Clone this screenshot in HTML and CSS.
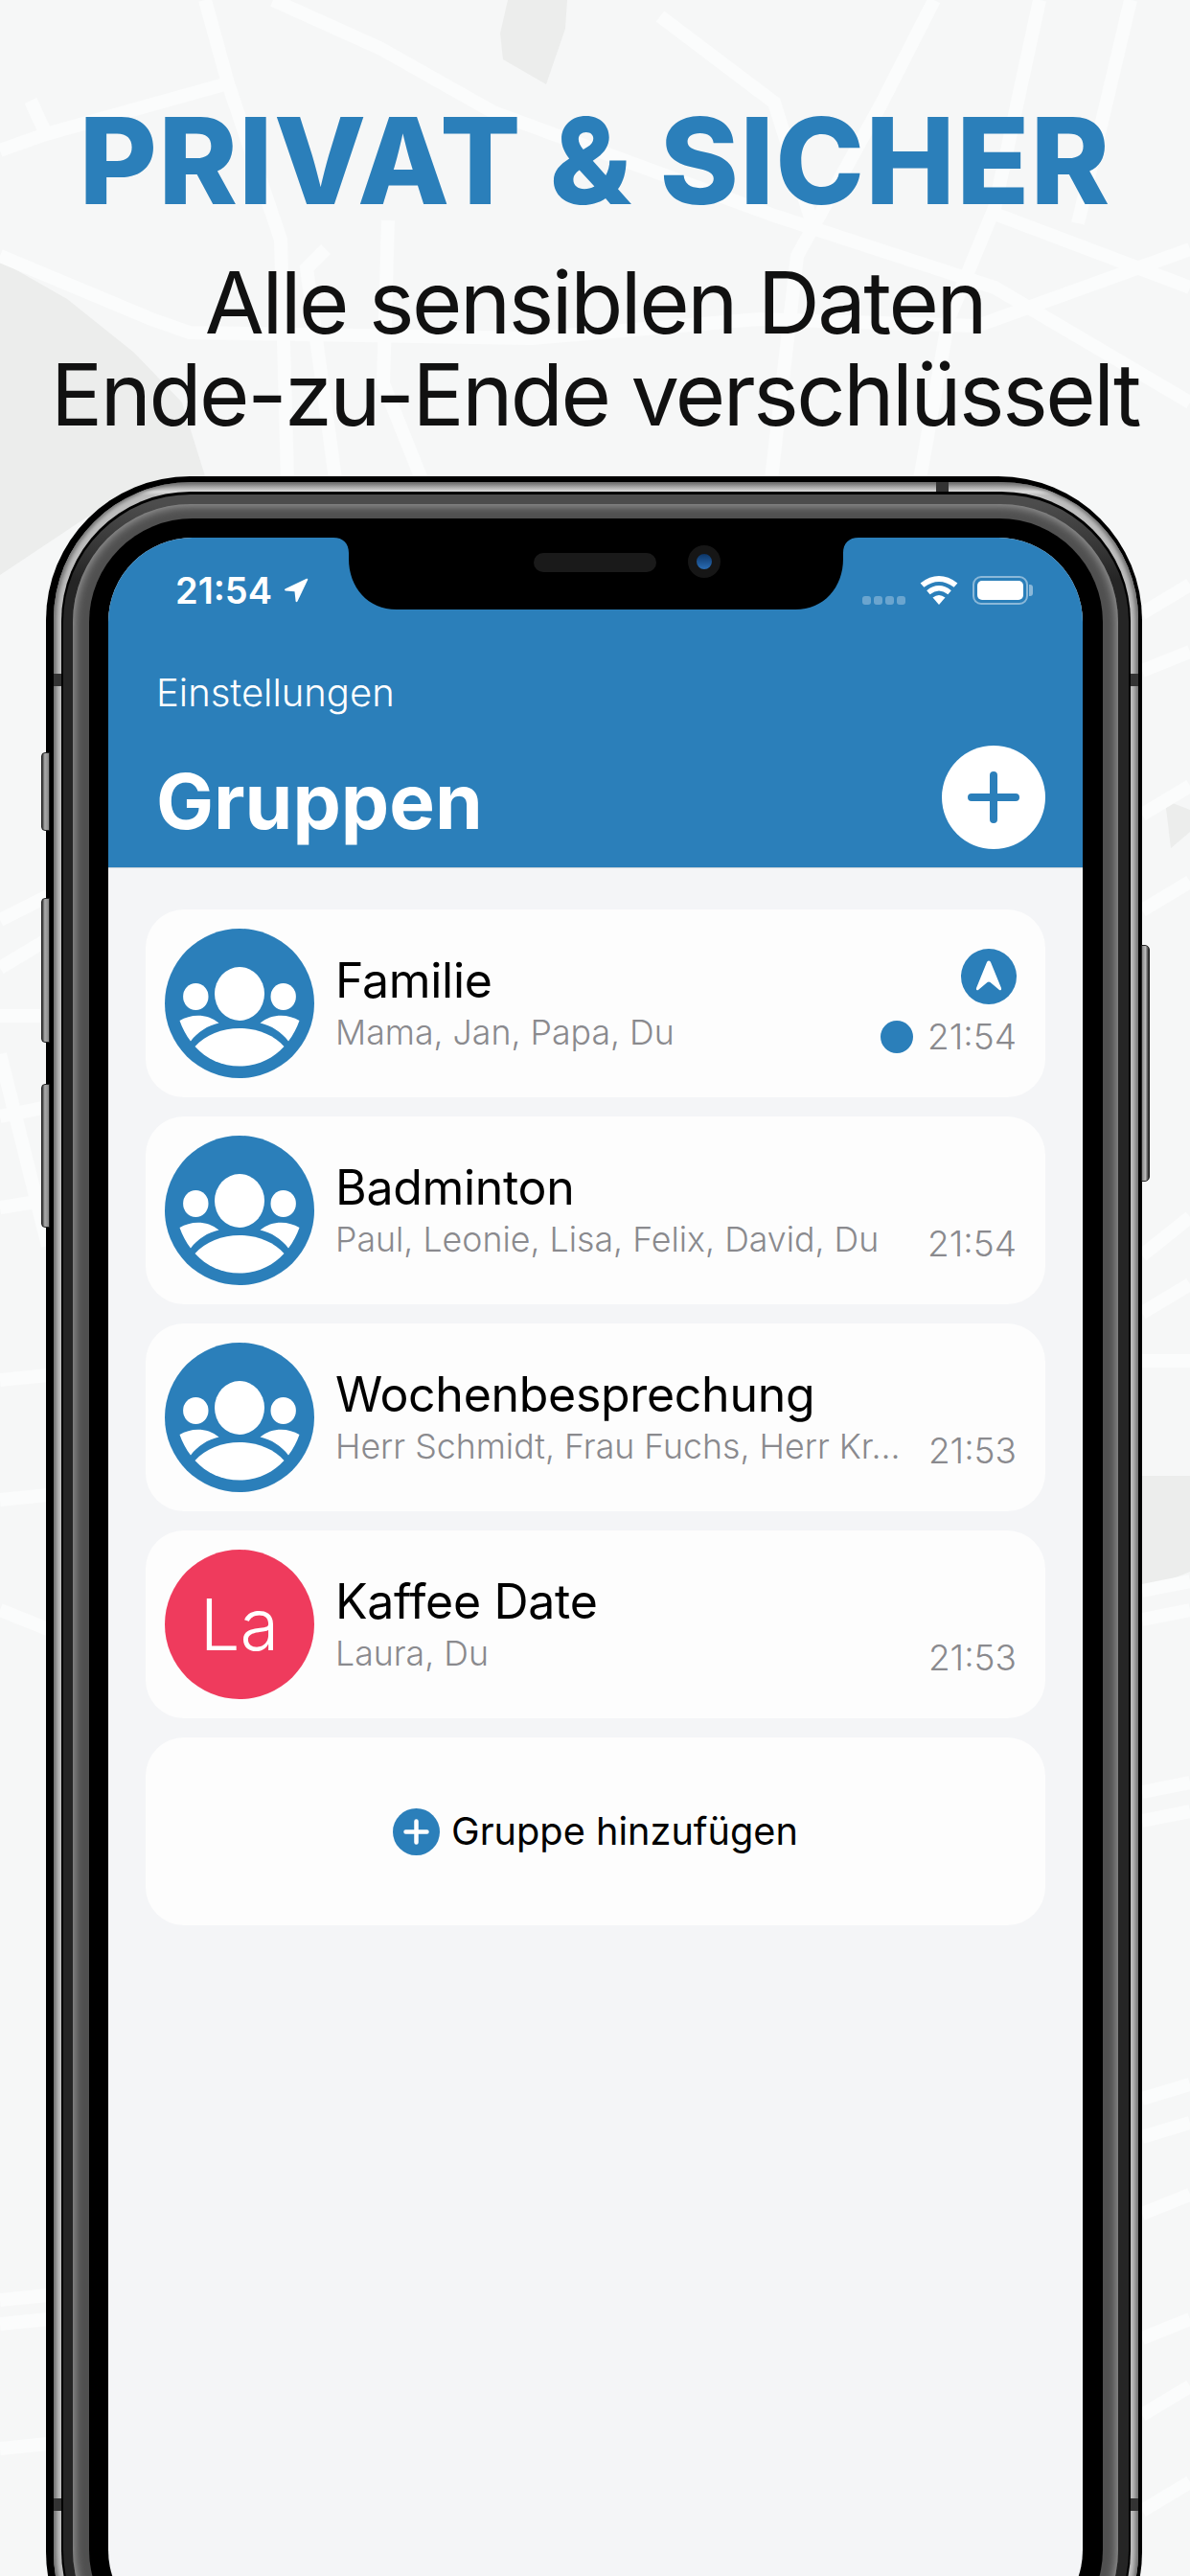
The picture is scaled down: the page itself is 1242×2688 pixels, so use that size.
FILE: index.html
```html
<!DOCTYPE html>
<html lang="de">
<head>
  <meta charset="UTF-8">
  <meta name="viewport" content="width=device-width, initial-scale=1.0">
  <title>Privat &amp; Sicher</title>
  <link rel="stylesheet" href="styles.css">
</head>
<body>

  <!-- Stadtplan im Hintergrund -->
  <svg class="map" viewBox="0 0 1242 2688" aria-hidden="true">
    <g fill="#ecedec">
      <path d="M0 272 L70 312 L140 368 L190 420 L215 500 L90 540 L0 600Z"/>
      <path d="M530 0 L592 0 L590 30 L570 88 L525 62 L522 35Z"/>
      <path d="M1216 835 L1242 845 L1242 868 L1222 885Z"/>
      <path d="M1192 1540 L1242 1540 L1242 1640 L1192 1660Z"/>
    </g>
    <g fill="none" stroke="#fbfcfc" stroke-width="14">
      <path d="M214 0 L238 87 L293 250 L300 500"/>
      <path d="M285 0 L396 50 L515 117 L808 225 L1038 300 L1242 420"/>
      <path d="M238 87 L48 140 L0 157"/>
      <path d="M32 105 L48 140"/>
      <path d="M689 17 L808 107 L850 240"/>
      <path d="M975 0 L919 110 L832 267 L805 500"/>
      <path d="M1085 0 L1038 217 L990 333 L960 500"/>
      <path d="M1180 0 L1125 233"/>
      <path d="M1038 223 L1242 300"/>
      <path d="M0 267 L158 333 L198 347 L555 353 L792 333 L1020 340 L1242 260"/>
      <path d="M405 230 L400 400 L440 500"/>
      <path d="M340 260 L320 280 L350 500"/>
      <path d="M0 960 L50 935"/>
      <path d="M0 1010 L50 980"/>
      <path d="M0 1060 L50 1060"/>
      <path d="M0 1100 L40 1260 L50 1300"/>
      <path d="M0 1165 L50 1155"/>
      <path d="M0 1260 L50 1252"/>
      <path d="M0 1440 L50 1435"/>
      <path d="M0 1565 L50 1560"/>
      <path d="M0 1680 L50 1700"/>
      <path d="M0 2400 L50 2395"/>
      <path d="M0 2425 L50 2420"/>
      <path d="M0 2555 L50 2550"/>
      <path d="M1192 640 L1242 610"/>
      <path d="M1192 700 L1242 680"/>
      <path d="M1192 850 L1242 820"/>
      <path d="M1192 950 L1242 920"/>
      <path d="M1192 1310 L1242 1270"/>
      <path d="M1192 1370 L1242 1340"/>
      <path d="M1192 1420 L1242 1420"/>
      <path d="M1192 1660 L1242 1650"/>
      <path d="M1192 1690 L1242 1680"/>
      <path d="M1192 1870 L1242 1860"/>
      <path d="M1192 1900 L1242 1890"/>
      <path d="M1192 2190 L1242 2175"/>
      <path d="M1192 2230 L1242 2215"/>
      <path d="M1192 2310 L1242 2290"/>
      <path d="M1192 2440 L1242 2420"/>
      <path d="M1192 2520 L1242 2490"/>
      <path d="M1192 2620 L1242 2590"/>
    </g>
  </svg>

  <header class="intro">
    <h1>PRIVAT &amp; SICHER</h1>
    <p>Alle sensiblen Daten<br>Ende-zu-Ende verschlüsselt</p>
  </header>

  <div class="phone">
    <span class="btn btn-silent"></span>
    <span class="btn btn-up"></span>
    <span class="btn btn-down"></span>
    <span class="btn btn-power"></span>
    <span class="seam seam-top"></span>
    <span class="seam seam-left"></span>
    <span class="seam seam-right"></span>
    <span class="seam seam-left-low"></span>
    <span class="seam seam-right-low"></span>

    <div class="band-silver"><div class="band-line"><div class="band-dark"><div class="band-gray"><div class="bezel">
      <main class="screen">
        <svg class="notch" viewBox="0 0 548 75">
          <path d="M0 0 C10 0 16 6 16 16 V22 C16 52 36 75 66 75 H482 C512 75 532 52 532 22 V16 C532 6 538 0 548 0Z"/>
        </svg>
        <span class="speaker"></span>
        <span class="camera"></span>

        <div class="head">
          <div class="status">
            <div class="clock">
              <span>21:54</span>
              <svg class="loc" viewBox="0 0 26 26"><path d="M1.5 11.5 L24 .8 Q25.6 .4 25.2 2 L14.5 24.5 Q13.4 26 12.6 24.4 L11.5 14.2 L2 13.6 Q.2 12.8 1.5 11.5Z"/></svg>
            </div>
            <div class="indicators">
              <span class="signal"><i></i><i></i><i></i><i></i></span>
              <svg class="wifi" viewBox="0 0 40 30">
                <path d="M20 30 L13.5 22.5 Q20 17.5 26.5 22.5Z"/>
                <path d="M10.6 19.2 L7.2 15.2 Q20 5 32.8 15.2 L29.4 19.2 Q20 12 10.6 19.2Z"/>
                <path d="M4.4 11.8 L.6 7.4 Q20 -7.4 39.4 7.4 L35.6 11.8 Q20 0 4.4 11.8Z"/>
              </svg>
              <span class="battery"><i></i></span>
            </div>
          </div>
          <a class="back">Einstellungen</a>
          <div class="title-row">
            <h2>Gruppen</h2>
            <span class="add-round">
              <svg viewBox="0 0 54 54"><path d="M27 4 V50 M4 27 H50"/></svg>
            </span>
          </div>
        </div>

        <section class="list">
          <article class="card">
            <svg class="avatar" viewBox="0 0 156 156"><use href="#group"/></svg>
            <div class="info">
              <h3>Familie</h3>
              <p>Mama, Jan, Papa, Du</p>
            </div>
            <div class="meta">
              <span class="nav-badge">
                <svg viewBox="0 0 58 58"><path d="M29 12.5 Q30.5 12.5 31.2 14.5 L42 41 Q42.5 44 40 43 L30.5 35 Q29 34 27.5 35 L18 43 Q15.5 44 16 41 L26.8 14.5 Q27.5 12.5 29 12.5Z"/></svg>
              </span>
              <div class="time-row"><span class="dot"></span><time>21:54</time></div>
            </div>
          </article>

          <article class="card">
            <svg class="avatar" viewBox="0 0 156 156"><use href="#group"/></svg>
            <div class="info">
              <h3>Badminton</h3>
              <p>Paul, Leonie, Lisa, Felix, David, Du</p>
            </div>
            <div class="meta">
              <div class="time-row"><time>21:54</time></div>
            </div>
          </article>

          <article class="card">
            <svg class="avatar" viewBox="0 0 156 156"><use href="#group"/></svg>
            <div class="info">
              <h3>Wochenbesprechung</h3>
              <p>Herr Schmidt, Frau Fuchs, Herr Kr...</p>
            </div>
            <div class="meta">
              <div class="time-row"><time>21:53</time></div>
            </div>
          </article>

          <article class="card">
            <div class="avatar avatar-red">La</div>
            <div class="info">
              <h3>Kaffee Date</h3>
              <p>Laura, Du</p>
            </div>
            <div class="meta">
              <div class="time-row"><time>21:53</time></div>
            </div>
          </article>

          <article class="card card-add">
            <svg class="add-small" viewBox="0 0 49 49">
              <circle cx="24.5" cy="24.5" r="24.5"/>
              <path d="M24.5 13.5 V35.5 M13.5 24.5 H35.5"/>
            </svg>
            <span>Gruppe hinzufügen</span>
          </article>
        </section>
      </main>
    </div></div></div></div></div>
  </div>

  <svg class="defs" width="0" height="0" aria-hidden="true">
    <symbol id="group" viewBox="0 0 156 156">
      <circle cx="78" cy="78" r="78" fill="#2b7fba"/>
      <g fill="#fff">
        <ellipse cx="78" cy="68" rx="26" ry="28"/>
        <ellipse cx="32.3" cy="71" rx="13.2" ry="14"/>
        <ellipse cx="123.7" cy="71" rx="13.2" ry="14"/>
        <path d="M31.5 123 C42 111 60 104 78 104 C96 104 114 111 124.5 123 C113 136 96 143.5 78 143.5 C60 143.5 43 136 31.5 123Z"/>
        <path d="M15.5 96 C27 89 44 88 56.5 98.5 C45 101 34 108 27 117.5 C22 111 18 103 15.5 96Z"/>
        <path d="M140.5 96 C129 89 112 88 99.5 98.5 C111 101 122 108 129 117.5 C134 111 138 103 140.5 96Z"/>
      </g>
    </symbol>
  </svg>

</body>
</html>
```

FILE: styles.css
```css
* {
  box-sizing: border-box;
}

html, body {
  height: 2688px;
}

body {
  position: relative;
  margin: 0;
  overflow: hidden;
  background-color: #f6f7f7;
  font-family: Inter, 'Liberation Sans', sans-serif;
}

.map {
  position: absolute;
  top: 0;
  left: 0;
  width: 1242px;
  height: 2688px;
}

.defs {
  position: absolute;
}

/* Ueberschrift */
.intro {
  position: relative;
  height: 497px;
  padding-top: 104px;
  text-align: center;
}

.intro h1 {
  margin: 0;
  font-size: 125px;
  line-height: 128px;
  font-weight: 800;
  letter-spacing: 1.2px;
  color: #2b7fba;
}

.intro p {
  margin: 36px 0 0;
  font-size: 90px;
  line-height: 96px;
  font-weight: 400;
  letter-spacing: -2.45px;
  color: #111;
}

/* Geraet */
.phone {
  position: relative;
  display: flex;
  width: 1144px;
  height: 2316px;
  margin-left: 48px;
  padding: 6px 4px 6px 8px;
  border-radius: 150px;
  background-color: #000;
}

.band-silver, .band-line, .band-dark, .band-gray, .bezel {
  display: flex;
  flex: 1;
}

.band-silver {
  padding: 10px 8px;
  border-radius: 143px;
  background: linear-gradient(to bottom, #6e6e6e 0, #dcdcdc 10px, #bdbdbd 14px);
  box-shadow: inset 3px 0 4px #6f6f6f, inset -3px 0 4px #6f6f6f;
}

.band-line {
  padding: 3px 2px;
  border-radius: 135px;
  background-color: #000;
}

.band-dark {
  padding: 10px 11px 10px 10px;
  border-radius: 133px;
  background: linear-gradient(to bottom, #4c4c4c 0, #4c4c4c 10px, #252525 90px);
}

.band-gray {
  padding: 15px 16px 15px 17px;
  border-radius: 123px;
  background-color: #505050;
  box-shadow: inset 0 0 10px 2px #9a9a9a;
}

.bezel {
  padding: 20px 21px 20px 20px;
  border-radius: 108px;
  background-color: #000;
}

.btn {
  position: absolute;
  width: 9px;
  background: linear-gradient(to right, #333, #aaa 40%, #888);
  border: 1px solid #222;
}

.btn-silent { left: -5px; top: 288px; height: 82px; border-radius: 4px 0 0 4px; }
.btn-up { left: -5px; top: 440px; height: 151px; border-radius: 4px 0 0 4px; }
.btn-down { left: -5px; top: 634px; height: 150px; border-radius: 4px 0 0 4px; }

.btn-power {
  left: 1143px;
  top: 489px;
  height: 247px;
  border-radius: 0 5px 5px 0;
  background: linear-gradient(to right, #888, #bbb 50%, #222);
}

.seam {
  position: absolute;
  background-color: #333;
}

.seam-top { top: 6px; left: 929px; width: 13px; height: 10px; }
.seam-left { top: 206px; left: 8px; width: 8px; height: 13px; }
.seam-right { top: 206px; left: 1132px; width: 8px; height: 13px; }
.seam-left-low { top: 2110px; left: 8px; width: 8px; height: 13px; }
.seam-right-low { top: 2110px; left: 1132px; width: 8px; height: 13px; }

/* Bildschirm */
.screen {
  position: relative;
  display: flex;
  flex: 1;
  flex-direction: column;
  overflow: hidden;
  border-radius: 88px;
  background-color: #f4f5f7;
}

.notch {
  position: absolute;
  top: 0;
  left: 235px;
  width: 548px;
  height: 75px;
}

.speaker {
  position: absolute;
  top: 16px;
  left: 444px;
  width: 128px;
  height: 20px;
  border-radius: 10px;
  background-color: #1a1a1a;
}

.camera {
  position: absolute;
  top: 8px;
  left: 605px;
  width: 34px;
  height: 34px;
  border-radius: 50%;
  border: 9px solid #161616;
  background: linear-gradient(to bottom, #0c3566, #2a6db5);
}

.head {
  height: 345px;
  padding-top: 40px;
  background-color: #2b7fba;
  border-bottom: 1px solid #c9d3da;
  color: #fff;
}

.status {
  display: flex;
  justify-content: space-between;
  height: 30px;
  padding: 0 57px 0 70px;
}

.clock {
  display: flex;
  align-items: center;
  gap: 12px;
  font-size: 38px;
  font-weight: 600;
}

.loc {
  width: 26px;
  height: 26px;
  fill: #fff;
}

.indicators {
  display: flex;
  align-items: center;
}

.signal {
  display: flex;
  gap: 3px;
  align-self: flex-end;
  margin-right: 15px;
}

.signal i {
  width: 9px;
  height: 9px;
  border-radius: 3px;
  background-color: rgba(255, 255, 255, .3);
}

.wifi {
  width: 40px;
  height: 30px;
  fill: #fff;
  margin-right: 15px;
}

.battery {
  position: relative;
  width: 58px;
  height: 30px;
  padding: 3px;
  border: 2px solid rgba(255, 255, 255, .45);
  border-radius: 9px;
}

.battery i {
  display: block;
  height: 100%;
  border-radius: 5px;
  background-color: #fff;
}

.battery::after {
  content: "";
  position: absolute;
  top: 7px;
  right: -7px;
  width: 4px;
  height: 12px;
  border-radius: 0 3px 3px 0;
  background-color: rgba(255, 255, 255, .45);
}

.back {
  display: block;
  margin: 68px 0 0 50px;
  font-size: 40px;
  line-height: 48px;
  font-weight: 300;
}

.title-row {
  display: flex;
  justify-content: space-between;
  align-items: center;
  margin-top: 31px;
  padding: 0 39px 0 50px;
}

.title-row h2 {
  margin: 0;
  padding-top: 8px;
  font-size: 80px;
  line-height: 100px;
  font-weight: 700;
}

.add-round {
  display: flex;
  justify-content: center;
  align-items: center;
  width: 108px;
  height: 108px;
  border-radius: 50%;
  background-color: #fff;
}

.add-round svg {
  width: 54px;
  height: 54px;
  fill: none;
  stroke: #2b7fba;
  stroke-width: 8;
  stroke-linecap: round;
}

/* Gruppenliste */
.list {
  display: flex;
  flex-direction: column;
  gap: 20px;
  padding: 43px 39px 0;
}

.card {
  display: flex;
  height: 196px;
  padding: 20px 30px 0 20px;
  border-radius: 40px;
  background-color: #fdfdfd;
}

.avatar {
  flex: none;
  width: 156px;
  height: 156px;
  margin-right: 22px;
}

.avatar-red {
  border-radius: 50%;
  background-color: #ef3b5d;
  color: #fff;
  font-size: 74px;
  font-weight: 300;
  line-height: 156px;
  text-align: center;
}

.info {
  flex: 1;
  padding-top: 24px;
  min-width: 0;
}

.info h3 {
  margin: 0;
  font-size: 50px;
  line-height: 60px;
  font-weight: 400;
  letter-spacing: -.3px;
  color: #000;
}

.info p {
  margin: 2px 0 0;
  font-size: 35.7px;
  line-height: 44px;
  font-weight: 300;
  color: #8a8a8e;
  white-space: nowrap;
}

.meta {
  display: flex;
  flex-direction: column;
  justify-content: flex-end;
  align-items: flex-end;
  padding-bottom: 41px;
}

.nav-badge {
  width: 58px;
  height: 58px;
  margin-bottom: 12px;
  border-radius: 50%;
  background-color: #2b7fba;
}

.nav-badge svg {
  display: block;
  width: 58px;
  height: 58px;
  fill: #fff;
}

.time-row {
  display: flex;
  align-items: center;
  gap: 15px;
  font-size: 37px;
  line-height: 44px;
  font-weight: 300;
  color: #8a8a8e;
}

.dot {
  width: 34px;
  height: 34px;
  border-radius: 50%;
  background-color: #2b7fba;
}

.card-add {
  justify-content: center;
  align-items: center;
  gap: 12px;
  padding: 0;
  font-size: 39.7px;
  color: #000;
}

.add-small {
  width: 49px;
  height: 49px;
  fill: #2b7fba;
}

.add-small path {
  fill: none;
  stroke: #fff;
  stroke-width: 4.5;
  stroke-linecap: round;
}
```
